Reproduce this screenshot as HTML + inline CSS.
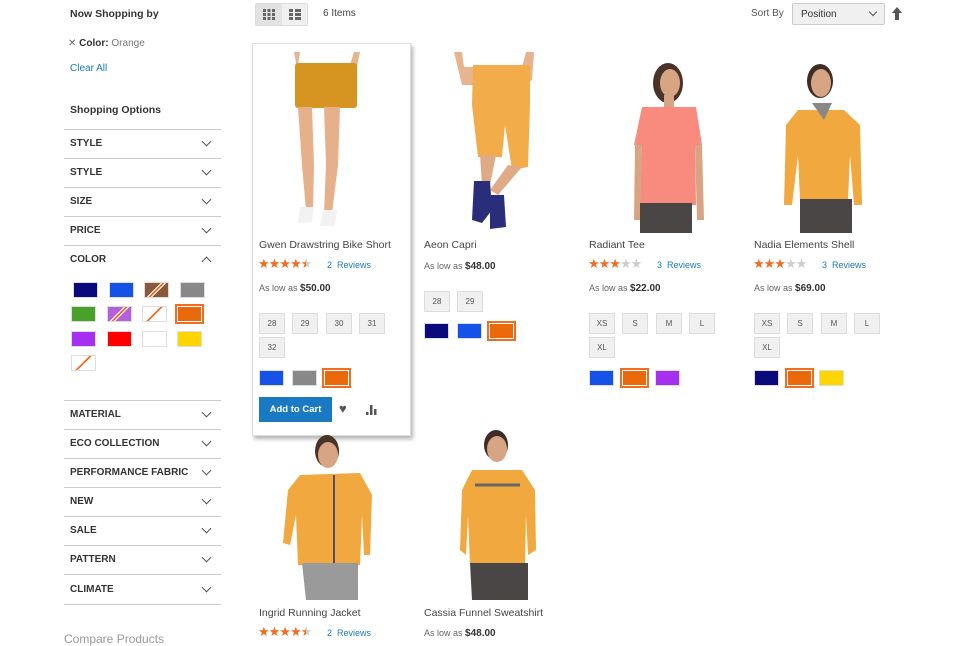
<!DOCTYPE html>
<html><head><meta charset="utf-8"><style>
*{margin:0;padding:0;box-sizing:border-box}
body{width:960px;height:640px;overflow:hidden;background:#fff;font-family:"Liberation Sans",sans-serif;color:#333;position:relative}
.a{position:absolute}
.t{font-size:10px;color:#333}
.b{font-weight:bold}
.ln{position:absolute;left:64px;width:157px;height:1px;background:#ccc}
.fl{position:absolute;left:70px;font-size:10px;font-weight:bold;color:#333}
.chev{position:absolute;left:203px;width:7px;height:7px;border-right:1.5px solid #555;border-bottom:1.5px solid #555;transform:rotate(45deg)}
.sw{position:absolute;width:25px;height:16px;border:1px solid #ddd}
.sz{position:absolute;width:26px;height:21px;background:#f0f0f0;border:1px solid #ddd;font-size:8px;color:#555;text-align:center;line-height:19px}
.name{position:absolute;font-size:10.5px;color:#444}
.stars{position:absolute;font-size:13px;letter-spacing:-1px;color:#f26c21}
.stars i{font-style:normal;color:#ccc}
.rev{position:absolute;font-size:9px;color:#1979c3}
.pr{position:absolute;font-size:9px;color:#666}
.pr b{font-size:10px;color:#333}
.sel{outline:2px solid #f26c21;outline-offset:0;border:1px solid #fff}
</style></head><body>

<div class="a t b" style="left:70px;top:8px;font-size:10.5px">Now Shopping by</div>
<div class="a t" style="left:68px;top:38px;font-size:10px"><span style="color:#666">✕</span> <b>Color:</b> <span style="color:#777">Orange</span></div>
<div class="a" style="left:70px;top:63px;font-size:10px;color:#1979c3">Clear All</div>
<div class="a t b" style="left:70px;top:104px;font-size:10.5px">Shopping Options</div>

<div class="ln" style="top:129px"></div>
<div class="fl" style="top:138px">STYLE</div><div class="chev" style="top:138px"></div>
<div class="ln" style="top:158px"></div>
<div class="fl" style="top:167px">STYLE</div><div class="chev" style="top:167px"></div>
<div class="ln" style="top:187px"></div>
<div class="fl" style="top:196px">SIZE</div><div class="chev" style="top:196px"></div>
<div class="ln" style="top:216px"></div>
<div class="fl" style="top:225px">PRICE</div><div class="chev" style="top:225px"></div>
<div class="ln" style="top:245px"></div>
<div class="fl" style="top:254px">COLOR</div><div class="chev" style="top:258px;transform:rotate(225deg)"></div>

<div class="sw" style="left:73px;top:282px;background:#0b0a7d"></div>
<div class="sw" style="left:109px;top:282px;background:#1652e8"></div>
<div class="sw" style="left:144px;top:282px;background:linear-gradient(135deg,#8b5a3c 42%,#fff 42%,#fff 46%,#f26c21 46%,#f26c21 54%,#fff 54%,#fff 58%,#8b5a3c 58%)"></div>
<div class="sw" style="left:180px;top:282px;background:#888"></div>
<div class="sw" style="left:71px;top:306px;background:#4aa12a"></div>
<div class="sw" style="left:107px;top:306px;background:linear-gradient(135deg,#b45fdc 42%,#fff 42%,#fff 46%,#f26c21 46%,#f26c21 54%,#fff 54%,#fff 58%,#b45fdc 58%)"></div>
<div class="sw" style="left:142px;top:306px;background:linear-gradient(135deg,#fff 46%,#f26c21 46%,#f26c21 54%,#fff 54%)"></div>
<div class="sw sel" style="left:177px;top:306px;background:#ea6a0b"></div>
<div class="sw" style="left:71px;top:331px;background:#a530f0"></div>
<div class="sw" style="left:107px;top:331px;background:#f00"></div>
<div class="sw" style="left:142px;top:331px;background:#fff"></div>
<div class="sw" style="left:177px;top:331px;background:#ffd500"></div>
<div class="sw" style="left:71px;top:355px;background:linear-gradient(135deg,#fff 46%,#f26c21 46%,#f26c21 54%,#fff 54%)"></div>

<div class="ln" style="top:400px"></div>
<div class="fl" style="top:409px">MATERIAL</div><div class="chev" style="top:409px"></div>
<div class="ln" style="top:429px"></div>
<div class="fl" style="top:438px">ECO COLLECTION</div><div class="chev" style="top:438px"></div>
<div class="ln" style="top:458px"></div>
<div class="fl" style="top:467px">PERFORMANCE FABRIC</div><div class="chev" style="top:467px"></div>
<div class="ln" style="top:487px"></div>
<div class="fl" style="top:496px">NEW</div><div class="chev" style="top:496px"></div>
<div class="ln" style="top:516px"></div>
<div class="fl" style="top:525px">SALE</div><div class="chev" style="top:525px"></div>
<div class="ln" style="top:545px"></div>
<div class="fl" style="top:554px">PATTERN</div><div class="chev" style="top:554px"></div>
<div class="ln" style="top:574px"></div>
<div class="fl" style="top:584px">CLIMATE</div><div class="chev" style="top:584px"></div>
<div class="ln" style="top:604px"></div>
<div class="a" style="left:64px;top:632px;font-size:12px;color:#999">Compare Products</div>

<div class="a" style="left:255px;top:3px;width:53px;height:23px;background:#f0f0f0;border:1px solid #ddd;border-radius:2px"></div>
<div class="a" style="left:256px;top:4px;width:26px;height:21px;background:#e2e2e2"></div>
<svg class="a" style="left:263px;top:9px" width="12" height="11"><g fill="#666"><rect x="0" y="0" width="3" height="3"/><rect x="4.5" y="0" width="3" height="3"/><rect x="9" y="0" width="3" height="3"/><rect x="0" y="4" width="3" height="3"/><rect x="4.5" y="4" width="3" height="3"/><rect x="9" y="4" width="3" height="3"/><rect x="0" y="8" width="3" height="3"/><rect x="4.5" y="8" width="3" height="3"/><rect x="9" y="8" width="3" height="3"/></g></svg>
<svg class="a" style="left:289px;top:9px" width="12" height="11"><g fill="#666"><rect x="0" y="0" width="4" height="3"/><rect x="6" y="0" width="6" height="3"/><rect x="0" y="4" width="4" height="3"/><rect x="6" y="4" width="6" height="3"/><rect x="0" y="8" width="4" height="3"/><rect x="6" y="8" width="6" height="3"/></g></svg>
<div class="a" style="left:323px;top:8px;font-size:10px;color:#444">6 Items</div>
<div class="a" style="left:751px;top:8px;font-size:10px;color:#555">Sort By</div>
<div class="a" style="left:792px;top:3px;width:93px;height:22px;background:#f0f0f0;border:1px solid #ccc;border-radius:2px;font-size:10px;color:#333;padding:5px 0 0 8px">Position</div>
<div class="a" style="left:870px;top:9px;width:6px;height:6px;border-right:1.5px solid #555;border-bottom:1.5px solid #555;transform:rotate(45deg)"></div>
<svg class="a" style="left:892px;top:7px" width="10" height="13"><path d="M5 0 L10 6 L7 6 L7 13 L3 13 L3 6 L0 6 Z" fill="#555"/></svg>

<div class="a" style="left:252px;top:43px;width:159px;height:393px;border:1px solid #ddd;box-shadow:2px 3px 4px rgba(0,0,0,.3);background:#fff"></div>

<svg class="a" style="left:250px;top:45px" width="700" height="560">
 <!-- 1 shorts -->
 <path d="M44 7 L50 7 L48 20 L100 20 L104 7 L110 7 L105 30 L96 38 L50 38 Z" fill="#e6b48e"/>
 <rect x="45" y="18" width="62" height="45" rx="3" fill="#d69421"/>
 <path d="M48 62 L62 62 L64 120 L63 165 L56 165 L52 120 Z M74 62 L90 62 L88 120 L82 168 L74 168 L76 120 Z" fill="#e5b08a"/>
 <path d="M50 162 L64 162 L62 177 L48 178 Z M73 165 L87 165 L85 181 L70 181 Z" fill="#f2f2f2"/>
 <!-- 2 capri -->
 <path d="M204 7 L212 7 L214 22 L272 22 L276 7 L284 7 L282 35 L276 40 L212 40 Z" fill="#e6b48e"/>
 <path d="M223 20 L280 20 L280 60 L278 122 L262 125 L255 80 L252 112 L228 112 L222 60 Z" fill="#f2ac4a"/>
 <path d="M230 110 L246 110 L240 140 L232 140 Z M258 120 L272 122 L248 150 L240 145 Z" fill="#e0aa86"/>
 <path d="M224 136 L240 136 L242 165 L232 178 L222 175 Z M240 150 L254 150 L256 182 L240 184 Z" fill="#2a2e7a"/>
 <!-- 3 tee -->
 <ellipse cx="418" cy="38" rx="15" ry="20" fill="#4a3328"/>
 <ellipse cx="420" cy="38" rx="10" ry="14" fill="#d7a583"/>
 <rect x="414" y="50" width="10" height="14" fill="#d7a583"/>
 <path d="M392 62 L446 62 L452 100 L445 100 L446 160 L390 160 L392 100 L384 100 Z" fill="#f98a7e"/>
 <path d="M385 100 L392 100 L390 175 L384 175 Z M445 100 L452 100 L454 175 L447 175 Z" fill="#d7a583"/>
 <rect x="390" y="158" width="52" height="30" fill="#4a4646"/>
 <!-- 4 shell -->
 <ellipse cx="570" cy="36" rx="13" ry="17" fill="#3e2d26"/>
 <ellipse cx="571" cy="38" rx="10" ry="14" fill="#d7a583"/>
 <path d="M548 65 L594 65 L610 80 L612 160 L604 160 L600 110 L598 155 L550 155 L548 110 L542 160 L534 160 L536 80 Z" fill="#f0a83f"/>
 <path d="M562 58 L582 58 L574 75 Z" fill="#888"/>
 <rect x="550" y="154" width="52" height="34" fill="#4a4646"/>
 <!-- 5 jacket -->
 <ellipse cx="77" cy="406" rx="12" ry="16" fill="#4a3328"/>
 <ellipse cx="78" cy="410" rx="10" ry="13" fill="#d7a583"/>
 <path d="M50 430 L110 428 L122 450 L120 510 L114 510 L112 470 L110 520 L48 520 L46 470 L40 500 L33 498 L38 445 Z" fill="#f0a83f"/>
 <line x1="84" y1="430" x2="84" y2="520" stroke="#2a2e7a" stroke-width="1.5"/>
 <path d="M52 518 L108 518 L108 555 L56 555 Z" fill="#9a9a9a"/>
 <!-- 6 sweatshirt -->
 <ellipse cx="246" cy="400" rx="12" ry="15" fill="#3e2d26"/>
 <ellipse cx="247" cy="404" rx="10" ry="13" fill="#d7a583"/>
 <path d="M222 425 L272 425 L285 445 L286 505 L278 510 L276 470 L275 520 L220 520 L218 470 L216 510 L210 505 L212 445 Z" fill="#f0a83f"/>
 <path d="M225 440 L270 440" stroke="#666" stroke-width="3"/>
 <path d="M220 518 L278 518 L278 555 L222 555 Z" fill="#4a4646"/>
</svg>

<div class="name" style="left:259px;top:239px">Gwen Drawstring Bike Short</div>
<div class="stars" style="left:258px;top:256px">★★★★<span style="background:linear-gradient(90deg,#f26c21 50%,#ccc 50%);-webkit-background-clip:text;color:transparent">★</span></div>
<div class="rev" style="left:327px;top:260px">2&nbsp; Reviews</div>
<div class="pr" style="left:259px;top:283px">As low as <b>$50.00</b></div>
<div class="sz" style="left:259px;top:313px">28</div><div class="sz" style="left:292px;top:313px">29</div><div class="sz" style="left:326px;top:313px">30</div><div class="sz" style="left:359px;top:313px">31</div>
<div class="sz" style="left:259px;top:337px">32</div>
<div class="sw" style="left:259px;top:370px;background:#1652e8"></div>
<div class="sw" style="left:292px;top:370px;background:#888"></div>
<div class="sw sel" style="left:324px;top:370px;background:#ea6a0b"></div>
<div class="a" style="left:259px;top:397px;width:73px;height:25px;background:#1979c3;border:1px solid #1979c3;color:#fff;font-size:9.5px;font-weight:bold;text-align:center;line-height:23px">Add to Cart</div>
<div class="a" style="left:339px;top:401px;font-size:13px;color:#555">♥</div>
<svg class="a" style="left:366px;top:405px" width="11" height="10"><g fill="#555"><rect x="0" y="7" width="2.5" height="3"/><rect x="4" y="0" width="2.5" height="10"/><rect x="8" y="4" width="2.5" height="6"/></g></svg>

<div class="name" style="left:424px;top:239px">Aeon Capri</div>
<div class="pr" style="left:424px;top:261px">As low as <b>$48.00</b></div>
<div class="sz" style="left:424px;top:291px">28</div><div class="sz" style="left:457px;top:291px">29</div>
<div class="sw" style="left:424px;top:323px;background:#0b0a7d"></div>
<div class="sw" style="left:457px;top:323px;background:#1652e8"></div>
<div class="sw sel" style="left:489px;top:323px;background:#ea6a0b"></div>

<div class="name" style="left:589px;top:239px">Radiant Tee</div>
<div class="stars" style="left:588px;top:256px">★★★<i>★★</i></div>
<div class="rev" style="left:657px;top:260px">3&nbsp; Reviews</div>
<div class="pr" style="left:589px;top:283px">As low as <b>$22.00</b></div>
<div class="sz" style="left:589px;top:313px">XS</div><div class="sz" style="left:622px;top:313px">S</div><div class="sz" style="left:656px;top:313px">M</div><div class="sz" style="left:689px;top:313px">L</div>
<div class="sz" style="left:589px;top:337px">XL</div>
<div class="sw" style="left:589px;top:370px;background:#1652e8"></div>
<div class="sw sel" style="left:622px;top:370px;background:#ea6a0b"></div>
<div class="sw" style="left:655px;top:370px;background:#a530f0"></div>

<div class="name" style="left:754px;top:239px">Nadia Elements Shell</div>
<div class="stars" style="left:753px;top:256px">★★★<i>★★</i></div>
<div class="rev" style="left:822px;top:260px">3&nbsp; Reviews</div>
<div class="pr" style="left:754px;top:283px">As low as <b>$69.00</b></div>
<div class="sz" style="left:754px;top:313px">XS</div><div class="sz" style="left:787px;top:313px">S</div><div class="sz" style="left:821px;top:313px">M</div><div class="sz" style="left:854px;top:313px">L</div>
<div class="sz" style="left:754px;top:337px">XL</div>
<div class="sw" style="left:754px;top:370px;background:#0b0a7d"></div>
<div class="sw sel" style="left:787px;top:370px;background:#ea6a0b"></div>
<div class="sw" style="left:819px;top:370px;background:#ffd500"></div>

<div class="name" style="left:259px;top:607px">Ingrid Running Jacket</div>
<div class="stars" style="left:258px;top:624px">★★★★<span style="background:linear-gradient(90deg,#f26c21 50%,#ccc 50%);-webkit-background-clip:text;color:transparent">★</span></div>
<div class="rev" style="left:327px;top:628px">2&nbsp; Reviews</div>

<div class="name" style="left:424px;top:607px">Cassia Funnel Sweatshirt</div>
<div class="pr" style="left:424px;top:628px">As low as <b>$48.00</b></div>
</body></html>
